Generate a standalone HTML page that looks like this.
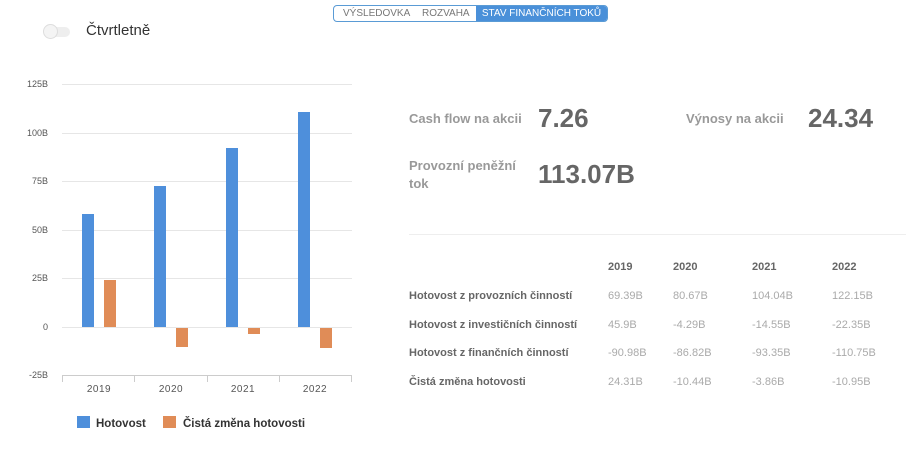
<!DOCTYPE html>
<html><head><meta charset="utf-8"><style>
body{margin:0;width:906px;height:450px;background:#fff;font-family:"Liberation Sans","DejaVu Sans",sans-serif;position:relative;overflow:hidden}
.a{position:absolute;white-space:nowrap}
.lbl{color:#999;font-weight:bold;font-size:13px}
.big{color:#666;font-weight:bold;font-size:26px}
.th{color:#666;font-weight:bold;font-size:11px}
.rl{color:#666;font-weight:bold;font-size:11px}
.v{color:#aaa;font-size:11px}
</style></head><body>
<div class="a" style="left:333px;top:5px;width:273px;height:15px;border:1px solid #5a9bd5;border-radius:4px;overflow:hidden;font-size:10px;color:#777;line-height:15px">
<span class="a" style="left:9px">VÝSLEDOVKA</span>
<span class="a" style="left:88px">ROZVAHA</span>
<span class="a" style="left:142px;width:131px;height:15px;background:#4a90d9;color:#fff;text-align:center">STAV FINANČNÍCH TOKŮ</span>
</div>
<div class="a" style="left:46px;top:27px;width:24px;height:10px;border-radius:5px;background:#eee"></div>
<div class="a" style="left:43px;top:24px;width:15px;height:15px;border-radius:50%;background:#f4f4f4;border:1px solid #ddd;box-sizing:border-box"></div>
<div class="a" style="left:86px;top:22px;font-size:15px;color:#333">Čtvrtletně</div>
<svg class="a" style="left:0;top:0" width="360" height="450" font-family="Liberation Sans, sans-serif">
<g stroke="#e6e6e6" stroke-width="1">
<line x1="62" x2="352" y1="84.5" y2="84.5"/><line x1="62" x2="352" y1="133.5" y2="133.5"/><line x1="62" x2="352" y1="181.5" y2="181.5"/><line x1="62" x2="352" y1="230.5" y2="230.5"/><line x1="62" x2="352" y1="278.5" y2="278.5"/><line x1="62" x2="352" y1="327.5" y2="327.5"/>
</g>
<g stroke="#ccc"><line x1="62" x2="352" y1="375.5" y2="375.5"/>
<line x1="62.5" x2="62.5" y1="375" y2="382"/><line x1="134.5" x2="134.5" y1="375" y2="382"/><line x1="207.5" x2="207.5" y1="375" y2="382"/><line x1="279.5" x2="279.5" y1="375" y2="382"/><line x1="351.5" x2="351.5" y1="375" y2="382"/></g>
<g font-size="9" fill="#555" text-anchor="end">
<text x="48" y="87">125B</text><text x="48" y="136">100B</text><text x="48" y="184">75B</text><text x="48" y="233">50B</text><text x="48" y="281">25B</text><text x="48" y="330">0</text><text x="48" y="378">-25B</text></g>
<g font-size="10" fill="#555" text-anchor="middle" letter-spacing="0.5"><text x="99" y="392">2019</text><text x="171" y="392">2020</text><text x="243" y="392">2021</text><text x="315" y="392">2022</text></g>
<g fill="#4e8fdb"><rect x="82" y="214" width="12" height="113"/><rect x="154" y="186" width="12" height="141"/><rect x="226" y="148" width="12" height="179"/><rect x="298" y="112" width="12" height="215"/></g>
<g fill="#e08c57"><rect x="104" y="280" width="12" height="47"/><rect x="176" y="328" width="12" height="19"/><rect x="248" y="328" width="12" height="6"/><rect x="320" y="328" width="12" height="20"/></g>
<rect x="77" y="416" width="13" height="12" fill="#4e8fdb"/><text x="96" y="427" font-size="11.5" font-weight="bold" fill="#333">Hotovost</text>
<rect x="163" y="416" width="13" height="12" fill="#e08c57"/><text x="183" y="427" font-size="11.5" font-weight="bold" fill="#333">Čistá změna hotovosti</text>
</svg>
<div class="a lbl" style="left:409px;top:111px">Cash flow na akcii</div>
<div class="a big" style="left:538px;top:103px">7.26</div>
<div class="a lbl" style="left:686px;top:111px">Výnosy na akcii</div>
<div class="a big" style="left:808px;top:103px">24.34</div>
<div class="a lbl" style="left:409px;top:157px;line-height:18px">Provozní peněžní<br>tok</div>
<div class="a big" style="left:538px;top:159px">113.07B</div>
<div class="a" style="left:409px;top:234px;width:497px;height:1px;background:#eee"></div>
<div class="a th" style="left:608px;top:261px">2019</div><div class="a th" style="left:673px;top:261px">2020</div><div class="a th" style="left:752px;top:261px">2021</div><div class="a th" style="left:832px;top:261px">2022</div>
<div class="a rl" style="left:409px;top:290px">Hotovost z provozních činností</div>
<div class="a v" style="left:608px;top:290px">69.39B</div><div class="a v" style="left:673px;top:290px">80.67B</div><div class="a v" style="left:752px;top:290px">104.04B</div><div class="a v" style="left:832px;top:290px">122.15B</div>
<div class="a rl" style="left:409px;top:319px">Hotovost z investičních činností</div>
<div class="a v" style="left:608px;top:319px">45.9B</div><div class="a v" style="left:673px;top:319px">-4.29B</div><div class="a v" style="left:752px;top:319px">-14.55B</div><div class="a v" style="left:832px;top:319px">-22.35B</div>
<div class="a rl" style="left:409px;top:347px">Hotovost z finančních činností</div>
<div class="a v" style="left:608px;top:347px">-90.98B</div><div class="a v" style="left:673px;top:347px">-86.82B</div><div class="a v" style="left:752px;top:347px">-93.35B</div><div class="a v" style="left:832px;top:347px">-110.75B</div>
<div class="a rl" style="left:409px;top:376px">Čistá změna hotovosti</div>
<div class="a v" style="left:608px;top:376px">24.31B</div><div class="a v" style="left:673px;top:376px">-10.44B</div><div class="a v" style="left:752px;top:376px">-3.86B</div><div class="a v" style="left:832px;top:376px">-10.95B</div>
</body></html>
